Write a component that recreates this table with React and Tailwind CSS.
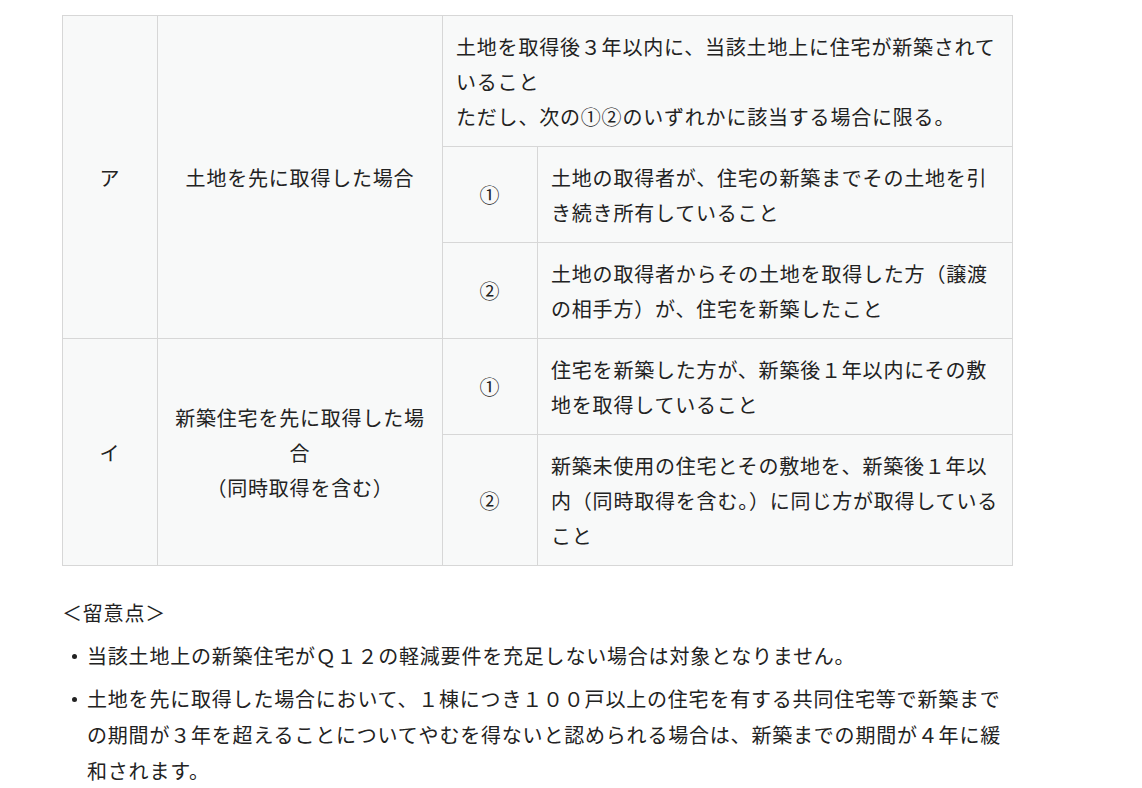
export default function App() {
  const font = { fontFamily: '"Noto Sans CJK JP", "Noto Sans", sans-serif' };
  const cell = "border border-[#d7d7d7] px-[13px] py-[12.5px] align-middle";
  return (
    <div className="min-h-[788px] w-[1142px] bg-white pl-[62px] pt-[15px] text-[20px] leading-[36px] tracking-[0.04em] text-[#222222]" style={font}>
      <table className="w-[950px] table-fixed border-collapse bg-[#f8f9f9] leading-[35px]">
        <colgroup>
          <col className="w-[95px]" />
          <col className="w-[285px]" />
          <col className="w-[95px]" />
          <col className="w-[475px]" />
        </colgroup>
        <tbody>
          <tr>
            <td rowSpan={3} className={`${cell} text-center`}>ア</td>
            <td rowSpan={3} className={`${cell} text-center`}>土地を先に取得した場合</td>
            <td colSpan={2} className={cell}>
              <span className="whitespace-nowrap">土地を取得後３年以内に、当該土地上に住宅が新築されて</span>
              <br />
              いること
              <br />
              ただし、次の①②のいずれかに該当する場合に限る。
            </td>
          </tr>
          <tr>
            <td className={`${cell} text-center`}>①</td>
            <td className={cell}>土地の取得者が、住宅の新築までその土地を引き続き所有していること</td>
          </tr>
          <tr>
            <td className={`${cell} text-center`}>②</td>
            <td className={cell}>土地の取得者からその土地を取得した方（譲渡の相手方）が、住宅を新築したこと</td>
          </tr>
          <tr>
            <td rowSpan={2} className={`${cell} text-center`}>イ</td>
            <td rowSpan={2} className={`${cell} text-center`}>
              新築住宅を先に取得した場合
              <br />
              （同時取得を含む）
            </td>
            <td className={`${cell} text-center`}>①</td>
            <td className={cell}>住宅を新築した方が、新築後１年以内にその敷地を取得していること</td>
          </tr>
          <tr>
            <td className={`${cell} text-center`}>②</td>
            <td className={cell}>新築未使用の住宅とその敷地を、新築後１年以内（同時取得を含む。）に同じ方が取得していること</td>
          </tr>
        </tbody>
      </table>

      <p className="mt-[29px]">＜留意点＞</p>
      <ul className="mt-[7px] flex w-[950px] flex-col gap-[7px]">
        <li className="flex">
          <span className="flex h-[36px] w-[25px] shrink-0 items-center justify-center">
            <span className="h-[5px] w-[5px] rounded-full bg-[#222222]" />
          </span>
          <span>当該土地上の新築住宅がＱ１２の軽減要件を充足しない場合は対象となりません。</span>
        </li>
        <li className="flex">
          <span className="flex h-[36px] w-[25px] shrink-0 items-center justify-center">
            <span className="h-[5px] w-[5px] rounded-full bg-[#222222]" />
          </span>
          <span>土地を先に取得した場合において、１棟につき１００戸以上の住宅を有する共同住宅等で新築までの期間が３年を超えることについてやむを得ないと認められる場合は、新築までの期間が４年に緩和されます。</span>
        </li>
      </ul>
    </div>
  );
}
